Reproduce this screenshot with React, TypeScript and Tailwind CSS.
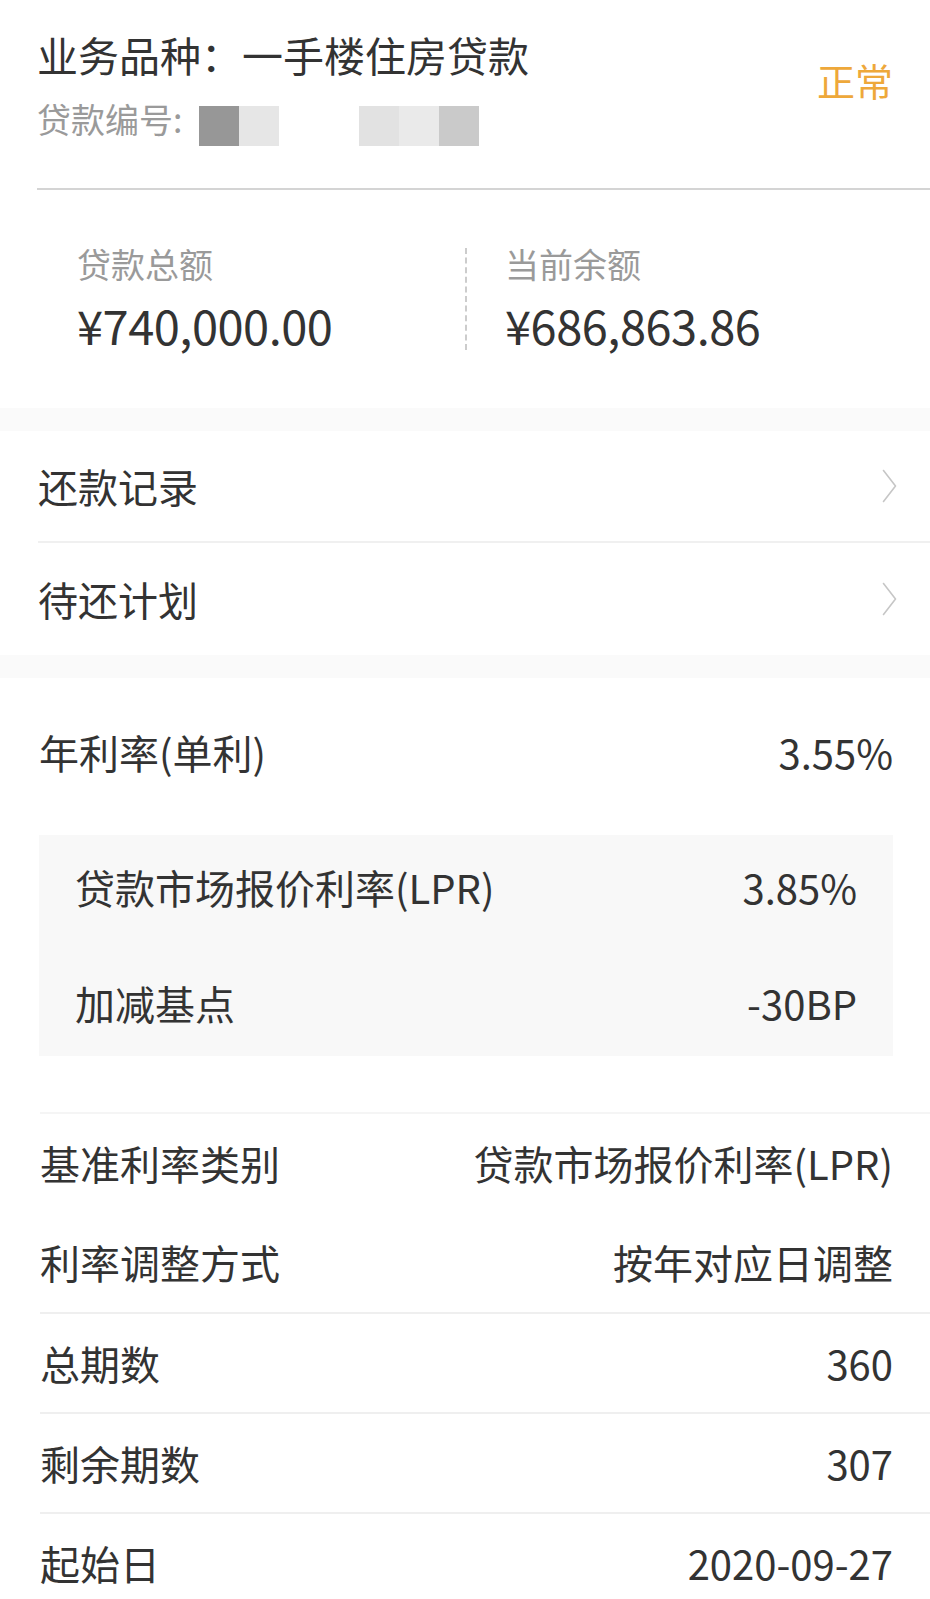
const font = { fontFamily: '"Noto Sans CJK SC", "Noto Sans", sans-serif' };

const menu = ['还款记录', '待还计划'];

const details = [
  { label: '基准利率类别', value: '贷款市场报价利率(LPR)', line: true },
  { label: '利率调整方式', value: '按年对应日调整', line: false },
  { label: '总期数', value: '360', line: true },
  { label: '剩余期数', value: '307', line: true },
  { label: '起始日', value: '2020-09-27', line: true },
];

function Chevron() {
  return (
    <svg width="15" height="34" viewBox="0 0 15 34" fill="none" className="text-[#c6c6c6]">
      <path d="M1.5 1.5 L13.5 17 L1.5 32.5" stroke="currentColor" strokeWidth="1.6" strokeLinecap="round" strokeLinejoin="round" />
    </svg>
  );
}

export default function App() {
  return (
    <div className="w-[930px] min-h-[1599px] overflow-hidden bg-white text-[#333333]" style={font}>
      {/* header */}
      <div className="ml-[37px] border-b-2 border-[#d4d4d4] pr-[37px] pb-[42px] pt-[30px]">
        <div className="flex items-start justify-between">
          <div>
            <h1 className="text-[41px] leading-[48px] font-normal">业务品种：一手楼住房贷款</h1>
            <div className="mt-[21px] flex items-start">
              <span className="text-[34px] leading-[40px] text-[#9a9a9a]">贷款编号:</span>
              <div className="ml-[17px] mt-[7px] flex">
                <div className="h-[40px] w-[40px] bg-[#979797]" />
                <div className="h-[40px] w-[40px] bg-[#e6e6e6]" />
              </div>
              <div className="ml-[80px] mt-[7px] flex">
                <div className="h-[40px] w-[40px] bg-[#e2e2e2]" />
                <div className="h-[40px] w-[40px] bg-[#eaeaea]" />
                <div className="h-[40px] w-[40px] bg-[#cacaca]" />
              </div>
            </div>
          </div>
          <span className="mt-[26px] text-[38px] leading-[48px] text-[#eea83a]">正常</span>
        </div>
      </div>

      {/* amounts */}
      <div className="grid grid-cols-2 px-[38px] pb-[58px] pt-[58px]">
        <div className="pl-[39px]">
          <p className="text-[34px] leading-[32px] text-[#9a9a9a]">贷款总额</p>
          <p className="mt-[20px] text-[47px] leading-[50px] tracking-[-0.5px]">¥740,000.00</p>
        </div>
        <div className="border-l-2 border-dashed border-[#cccccc] pl-[38px]">
          <p className="text-[34px] leading-[32px] text-[#9a9a9a]">当前余额</p>
          <p className="mt-[20px] text-[47px] leading-[50px] tracking-[-0.5px]">¥686,863.86</p>
        </div>
      </div>

      <div className="h-[23px] bg-[#fafafa]" />

      {/* menu */}
      <div className="ml-[38px]">
        {menu.map((item, i) => (
          <div
            key={item}
            className={`flex h-[112px] items-center justify-between pr-[33px] ${i === 0 ? 'border-b-2 border-[#f0f0f0]' : ''}`}
          >
            <span className="text-[40px] leading-[40px]">{item}</span>
            <Chevron />
          </div>
        ))}
      </div>

      <div className="h-[23px] bg-[#fafafa]" />

      {/* rates */}
      <div className="ml-[39px] pr-[37px]">
        <div className="flex justify-between pb-[63px] pt-[54px] text-[40px] leading-[40px]">
          <span>年利率(单利)</span>
          <span>3.55%</span>
        </div>
        <div className="flex flex-col gap-[76px] bg-[#f8f8f8] px-[36px] pb-[33px] pt-[32px] text-[40px] leading-[40px]">
          <div className="flex justify-between">
            <span>贷款市场报价利率(LPR)</span>
            <span>3.85%</span>
          </div>
          <div className="flex justify-between">
            <span>加减基点</span>
            <span>-30BP</span>
          </div>
        </div>
      </div>

      {/* details */}
      <div className="ml-[40px] mt-[56px]">
        {details.map((row, i) => (
          <div
            key={row.label}
            className={`flex h-[100px] items-center justify-between pr-[37px] text-[40px] leading-[40px] ${
              row.line ? (i === 0 ? 'border-t-2 border-[#f5f5f5]' : 'border-t-2 border-[#efefef]') : ''
            }`}
          >
            <span>{row.label}</span>
            <span>{row.value}</span>
          </div>
        ))}
      </div>
    </div>
  );
}
